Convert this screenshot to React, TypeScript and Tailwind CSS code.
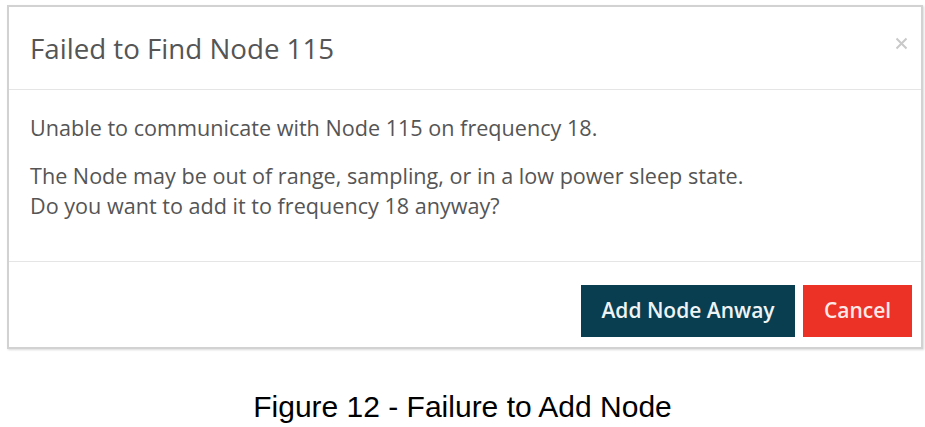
export default function App() {
  return (
    <div className="w-[925px] h-[427px] bg-white font-['Open_Sans',sans-serif] flex flex-col">
      <div className="shrink-0 ml-[7px] mt-[5px] w-[916px] h-[344px] border-2 border-[#d2d2d2] flex flex-col shadow-[1px_1px_2px_rgba(0,0,0,0.15)]">
        <div className="h-[83px] flex items-center justify-between pl-[21px] pr-[13px] border-b border-[#e5e5e5]">
          <h2 className="text-[27.7px] text-[#555] font-normal pt-[1px]">Failed to Find Node 115</h2>
          <svg width="13" height="13" viewBox="0 0 13 13" className="mb-[10px]">
            <path d="M1.5 1.5 L11.5 11.5 M11.5 1.5 L1.5 11.5" stroke="#c9c9c9" strokeWidth="2" />
          </svg>
        </div>
        <div className="h-[172px] pl-[21px] pt-[23px] text-[21.6px] leading-[30px] text-[#555] border-b border-[#e5e5e5]">
          <p>Unable to communicate with Node 115 on frequency 18.</p>
          <p className="mt-[18px]">
            The Node may be out of range, sampling, or in a low power sleep state.
            <br />
            Do you want to add it to frequency 18 anyway?
          </p>
        </div>
        <div className="flex-1 flex items-start justify-end gap-[8px] pr-[9px] pt-[23px]">
          <button className="h-[52px] w-[214px] bg-[#093d50] text-[#eef4f6] text-[21px] font-semibold">
            Add Node Anway
          </button>
          <button className="h-[52px] w-[109px] bg-[#ec3127] text-[#fde8e6] text-[21px] font-semibold">
            Cancel
          </button>
        </div>
      </div>
      <div className="flex justify-center pt-[43px]">
        <p className="font-['Liberation_Sans',Arial,sans-serif] text-[30px] leading-[30px] text-black">
          Figure 12 - Failure to Add Node
        </p>
      </div>
    </div>
  );
}
